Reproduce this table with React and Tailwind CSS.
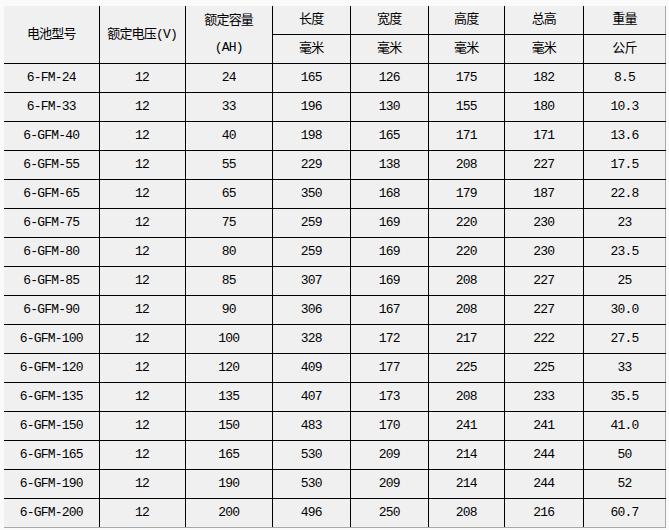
const rows = [
  ["6-FM-24", "12", "24", "165", "126", "175", "182", "8.5"],
  ["6-FM-33", "12", "33", "196", "130", "155", "180", "10.3"],
  ["6-GFM-40", "12", "40", "198", "165", "171", "171", "13.6"],
  ["6-GFM-55", "12", "55", "229", "138", "208", "227", "17.5"],
  ["6-GFM-65", "12", "65", "350", "168", "179", "187", "22.8"],
  ["6-GFM-75", "12", "75", "259", "169", "220", "230", "23"],
  ["6-GFM-80", "12", "80", "259", "169", "220", "230", "23.5"],
  ["6-GFM-85", "12", "85", "307", "169", "208", "227", "25"],
  ["6-GFM-90", "12", "90", "306", "167", "208", "227", "30.0"],
  ["6-GFM-100", "12", "100", "328", "172", "217", "222", "27.5"],
  ["6-GFM-120", "12", "120", "409", "177", "225", "225", "33"],
  ["6-GFM-135", "12", "135", "407", "173", "208", "233", "35.5"],
  ["6-GFM-150", "12", "150", "483", "170", "241", "241", "41.0"],
  ["6-GFM-165", "12", "165", "530", "209", "214", "244", "50"],
  ["6-GFM-190", "12", "190", "530", "209", "214", "244", "52"],
  ["6-GFM-200", "12", "200", "496", "250", "208", "216", "60.7"]
];

const widths = ["w-[95px]", "w-[86px]", "w-[87px]", "w-[78px]", "w-[78px]", "w-[76px]", "w-[79px]", "w-[82px]"];

function cellClass(col, lastRow) {
  let c = "border border-black p-0 text-center align-middle font-normal";
  if (col === 0) c += " border-l-0";
  if (col === 7) c += " border-r-[#a8a8a8]";
  if (lastRow) c += " border-b-[#a8a8a8]";
  return c;
}

export default function App() {
  return (
    <div
      className="w-[669px] h-[530px] bg-[#fafafa] pt-[6px] pl-[4px] text-[13px] text-black tracking-[-0.8px]"
      style={{ fontFamily: '"Liberation Mono", "Noto Sans CJK SC", monospace' }}
    >
      <table className="table-fixed border-collapse bg-[#f0f0f0] w-[662px]">
        <colgroup>
          {widths.map((w, i) => (
            <col key={i} className={w} />
          ))}
        </colgroup>
        <thead>
          <tr className="h-[28px]">
            <th rowSpan={2} className={cellClass(0) + " border-t-0"}>电池型号</th>
            <th rowSpan={2} className={cellClass(1) + " border-t-0"}>额定电压(V)</th>
            <th rowSpan={2} className={cellClass(2) + " border-t-0 leading-[27px]"}>
              额定容量<br />(AH)
            </th>
            <th className={cellClass(3) + " border-t-0"}>长度</th>
            <th className={cellClass(4) + " border-t-0"}>宽度</th>
            <th className={cellClass(5) + " border-t-0"}>高度</th>
            <th className={cellClass(6) + " border-t-0"}>总高</th>
            <th className={cellClass(7) + " border-t-0"}>重量</th>
          </tr>
          <tr className="h-[29px]">
            <th className={cellClass(3)}>毫米</th>
            <th className={cellClass(4)}>毫米</th>
            <th className={cellClass(5)}>毫米</th>
            <th className={cellClass(6)}>毫米</th>
            <th className={cellClass(7)}>公斤</th>
          </tr>
        </thead>
        <tbody>
          {rows.map((r, i) => (
            <tr key={r[0]} className="h-[29px]">
              {r.map((v, j) => (
                <td key={j} className={cellClass(j, i === rows.length - 1)}>
                  {v}
                </td>
              ))}
            </tr>
          ))}
        </tbody>
      </table>
    </div>
  );
}
